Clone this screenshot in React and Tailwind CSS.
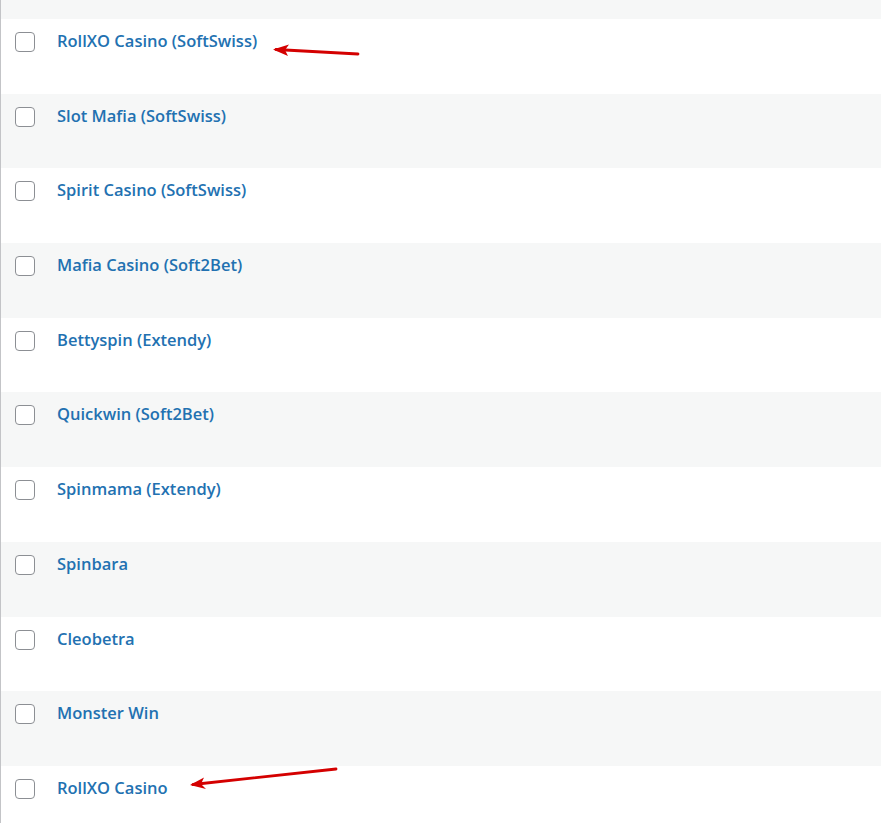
import React from "react";

const rows = [
  "RollXO Casino (SoftSwiss)",
  "Slot Mafia (SoftSwiss)",
  "Spirit Casino (SoftSwiss)",
  "Mafia Casino (Soft2Bet)",
  "Bettyspin (Extendy)",
  "Quickwin (Soft2Bet)",
  "Spinmama (Extendy)",
  "Spinbara",
  "Cleobetra",
  "Monster Win",
  "RollXO Casino",
];

export default function App() {
  return (
    <div className="relative w-[881px] h-[823px] overflow-hidden bg-white" style={{ fontFamily: '"Open Sans", "Noto Sans", sans-serif' }}>
      <div className="border-l border-[#c3c4c7] h-full">
        <div className="h-[19px] bg-[#f6f7f7]" />
        {rows.map((r, i) => (
          <div
            key={i}
            className={`h-[74.7px] flex items-start ${i % 2 === 0 ? "bg-white" : "bg-[#f6f7f7]"}`}
          >
            <div className="mt-[13px] ml-[14px] w-[20px] h-[20px] rounded-[4px] border border-[#8c8f94] bg-white shrink-0" />
            <a className="ml-[22px] mt-[11px] text-[16.5px] leading-[22px] font-semibold text-[#2271b1]">{r}</a>
          </div>
        ))}
      </div>
      <svg className="absolute inset-0 pointer-events-none" width="881" height="823">
        <g fill="none" stroke="#d40000" strokeWidth="2.8" strokeLinecap="round" strokeLinejoin="round">
          <line x1="358" y1="54" x2="276" y2="49.5" />
          <line x1="336" y1="769" x2="193" y2="784.5" />
        </g>
        <g fill="#d40000">
          <polygon points="273,49.5 289,44.5 285,50 288,56" />
          <polygon points="190,785 204,777.5 201,784 206,789" />
        </g>
      </svg>
    </div>
  );
}
